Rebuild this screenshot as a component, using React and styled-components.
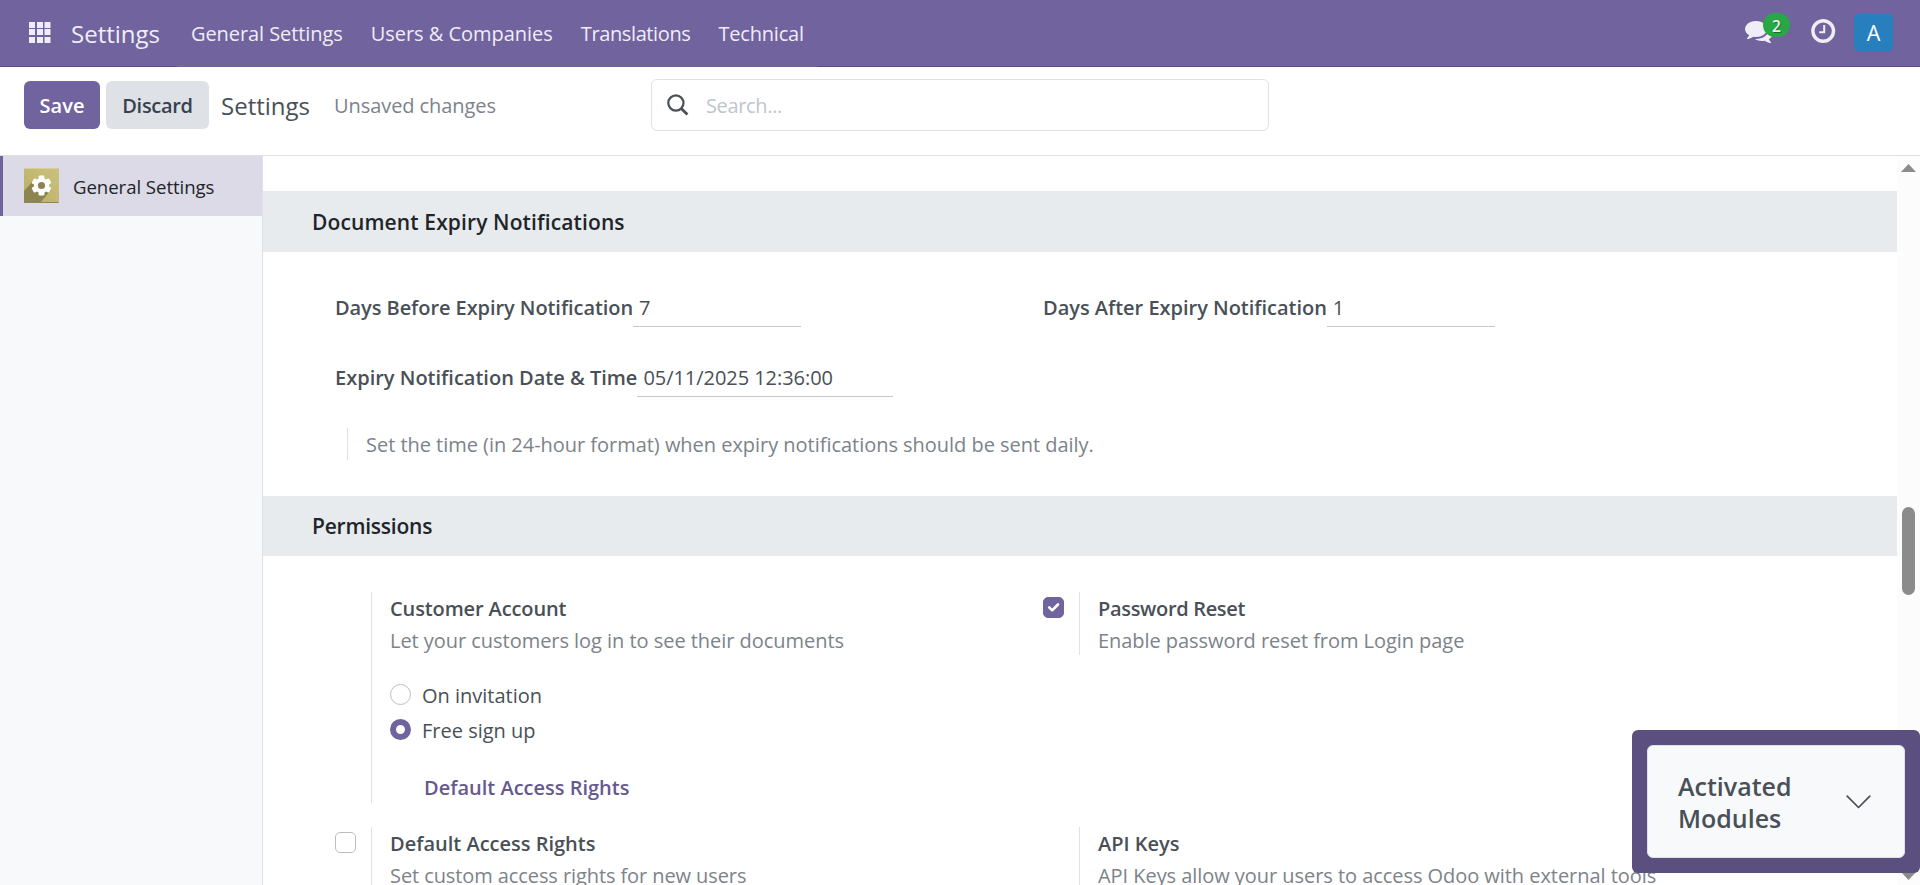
import React from 'react';
import styled, { createGlobalStyle, css } from 'styled-components';

const GlobalStyle = createGlobalStyle`
  *, *::before, *::after { box-sizing: border-box; }
  body {
    margin: 0;
    background: #fff;
    color: #495057;
    font-family: "Open Sans", "Noto Sans", sans-serif;
    font-size: 20px;
  }
`;

const tracked = css`
  letter-spacing: ${(p) => p.$track || 0}px;
  white-space: nowrap;
`;

const Page = styled.div`
  position: relative;
  display: flex;
  flex-direction: column;
  width: 1920px;
  height: 885px;
  overflow: hidden;
`;

/* ---------- top navigation ---------- */

const Navbar = styled.header`
  display: flex;
  flex: none;
  height: 67px;
  background: #71639e;
  box-shadow: inset 0 -1px 0 #5a4f7f;
  color: #efedf5;
`;

const AppsButton = styled.div`
  display: flex;
  align-items: center;
  width: 71px;
  padding: 0 0 2px 29px;
`;

const Brand = styled.div`
  display: flex;
  align-items: center;
  width: 106px;
  font-size: 24px;
  ${tracked}
`;

const Menu = styled.nav`
  display: flex;
  align-items: center;
  gap: 28px;
  width: 640px;
  padding-left: 14px;
  background: #71639e;
`;

const MenuItem = styled.span`
  ${tracked}
`;

const Systray = styled.div`
  display: flex;
  align-items: flex-start;
  margin-left: auto;
  padding-right: 27px;
`;

const Messages = styled.div`
  position: relative;
  width: 66px;
  padding-top: 17px;
  svg { display: block; }
`;

const Badge = styled.span`
  position: absolute;
  top: 13px;
  left: 18px;
  width: 27px;
  height: 24px;
  border-radius: 12px;
  background: #28a745;
  color: #efedf5;
  font-size: 15.5px;
  font-weight: 600;
  line-height: 26px;
  text-align: center;
  text-shadow: 1px 1px 0 rgba(0, 0, 0, 0.35);
`;

const Activity = styled.div`
  width: 43px;
  padding-top: 19px;
  svg { display: block; }
`;

const Avatar = styled.div`
  width: 39px;
  height: 39px;
  margin-top: 13px;
  border-radius: 6px;
  background: #277fbe;
  color: #fff;
  font-size: 21.5px;
  line-height: 39px;
  text-align: center;
`;

/* ---------- control panel ---------- */

const ControlPanel = styled.div`
  display: flex;
  align-items: flex-start;
  flex: none;
  height: 89px;
  padding: 12px 24px 0;
  border-bottom: 1px solid #dee2e6;
`;

const Actions = styled.div`
  display: flex;
  align-items: center;
  width: 627px;
  height: 52px;
`;

const Button = styled.button`
  height: 48px;
  margin-right: ${(p) => (p.$primary ? 6 : 12)}px;
  padding: 0;
  width: ${(p) => (p.$primary ? 76 : 103)}px;
  border: 0;
  border-radius: 6px;
  background: ${(p) => (p.$primary ? '#71639e' : '#dee2e6')};
  color: ${(p) => (p.$primary ? '#fff' : '#374151')};
  font: 600 20px "Open Sans", "Noto Sans", sans-serif;
  ${tracked}
`;

const Title = styled.h1`
  margin: 0;
  width: 113px;
  font-size: 24px;
  font-weight: 400;
`;

const Status = styled.span`
  color: #7c838a;
  ${tracked}
`;

const SearchBox = styled.div`
  display: flex;
  align-items: center;
  gap: 17px;
  width: 618px;
  height: 52px;
  padding-left: 15px;
  border: 1px solid #dee2e6;
  border-radius: 6px;
  svg { display: block; }
`;

const Placeholder = styled.span`
  color: #c0c5cd;
  ${tracked}
`;

/* ---------- body ---------- */

const Main = styled.div`
  display: flex;
  flex: 1;
  min-height: 0;
`;

const Sidebar = styled.aside`
  flex: none;
  width: 263px;
  border-right: 1px solid #dee2e6;
  background: #f8f9fb;
`;

const SidebarTab = styled.div`
  display: flex;
  align-items: center;
  height: 60px;
  padding-left: 21px;
  border-left: 3px solid #71639e;
  background: #dcdae7;
  color: #212529;
  font-size: 18.6px;
  ${tracked}
  svg { display: block; margin: 0 14px 1px 0; }
`;

const Content = styled.main`
  flex: 1;
  min-width: 0;
  height: 100%;
  padding-top: 35px;
  overflow: hidden;
`;

const SectionTitle = styled.h2`
  display: flex;
  align-items: center;
  height: ${(p) => p.$height}px;
  margin: 0;
  padding-left: 49px;
  background: #e7ebee;
  color: #212529;
  font-size: 21px;
  font-weight: 600;
  ${tracked}
`;

const FieldsPanel = styled.div`
  padding: 40px 0 36px 72px;
`;

const FieldRow = styled.div`
  display: flex;
  height: 35px;
  margin-bottom: ${(p) => p.$gap}px;
`;

const Field = styled.div`
  display: flex;
  width: 708px;
  line-height: 32px;
`;

const FieldLabel = styled.label`
  font-weight: 600;
  ${tracked}
`;

const FieldValue = styled.div`
  width: ${(p) => p.$width}px;
  padding-left: 6px;
  border-bottom: 1px solid #c6c8ca;
  ${tracked}
`;

const Note = styled.div`
  margin-left: 12px;
  height: 32px;
  padding-left: 18px;
  border-left: 1px solid #dee2e6;
  color: #7c838a;
  line-height: 34px;
  ${tracked}
`;

const SettingsGrid = styled.div`
  display: grid;
  grid-template-columns: 708px 1fr;
  align-items: start;
  row-gap: 24px;
  padding: 36px 0 0 72px;
`;

const Setting = styled.div`
  display: flex;
`;

const SettingLeft = styled.div`
  flex: none;
  width: 36px;
  padding-top: 5px;
`;

const Checkbox = styled.span`
  display: flex;
  align-items: center;
  justify-content: center;
  width: 21px;
  height: 21px;
  border: 1px solid ${(p) => (p.$checked ? '#71639e' : '#bbbec1')};
  border-radius: 5px;
  background: ${(p) => (p.$checked ? '#71639e' : '#fff')};
`;

const SettingRight = styled.div`
  height: ${(p) => p.$height}px;
  padding: 1px 0 0 18px;
  border-left: 1px solid #dee2e6;
`;

const SettingLabel = styled.div`
  font-weight: 600;
  line-height: 32px;
  ${tracked}
`;

const SettingText = styled.div`
  color: #7c838a;
  line-height: 32px;
  ${tracked}
`;

const RadioList = styled.div`
  margin: 20px 0 24px;
`;

const RadioRow = styled.label`
  display: flex;
  align-items: center;
  gap: 11px;
  height: 35px;
  ${tracked}
`;

const Radio = styled.span`
  width: 21px;
  height: 21px;
  border: ${(p) => (p.$checked ? '6px solid #71639e' : '1px solid #bbbec1')};
  border-radius: 50%;
  background: #fff;
`;

const RadioText = styled.span`
  padding-top: 1px;
`;

const SettingLink = styled.a`
  display: block;
  margin-left: 34px;
  color: #66598f;
  font-weight: 600;
  line-height: 34px;
  ${tracked}
`;

const Scrollbar = styled.div`
  display: flex;
  flex-direction: column;
  align-items: center;
  flex: none;
  width: 23px;
  padding: 8px 0 5px;
  background: #fcfcfc;
  svg { display: block; }
`;

const Thumb = styled.div`
  width: 13px;
  height: 88px;
  margin: 335px 0 auto;
  border-radius: 7px;
  background: #8b8b8b;
`;

/* ---------- floating module panel ---------- */

const ModulesPanel = styled.div`
  position: absolute;
  right: 0;
  bottom: 12px;
  width: 288px;
  height: 143px;
  padding: 15px;
  border-radius: 6px;
  background: #5b4f7f;
`;

const ModulesToggle = styled.div`
  display: flex;
  align-items: center;
  justify-content: space-between;
  height: 100%;
  padding: 1px 33px 0 30px;
  border: 1px solid #dee2e6;
  border-radius: 6px;
  background: #f8f9fb;
  font-size: 25px;
  font-weight: 600;
  line-height: 32px;
  svg { display: block; }
`;

const ModulesLabel = styled.span`
  width: 120px;
`;

/* ---------- icons ---------- */

const AppsIcon = () => (
  <svg width="22" height="21" viewBox="0 0 22 21" fill="#efedf5">
    {[0, 7, 15].map((y) =>
      [0, 8, 15.5].map((x) => <rect key={`${x}-${y}`} x={x} y={y} width="6" height="6" />)
    )}
  </svg>
);

const CommentsIcon = () => (
  <svg width="28" height="28" viewBox="0 0 1792 1792" fill="#efedf5">
    <path d="M1408 768q0 139-94 257t-256.5 186.5-353.5 68.5q-86 0-176-16-124 88-278 128-36 9-86 16h-3q-11 0-20.5-8t-11.5-21q-1-3-1-6.5t.5-6.5 2-6l2.5-5 3.5-5.5 4-5 4.5-5 4-4.5q5-6 23-25t26-29.5 22.5-29 25-38.5 20.5-44q-124-72-195-177t-71-224q0-139 94-257t256.5-186.5 353.5-68.5 353.5 68.5 256.5 186.5 94 257zm384 256q0 120-71 224.5t-195 176.5q10 24 20.5 44t25 38.5 22.5 29 26 29.5 23 25q1 1 4 4.5t4.5 5 4 5 3.5 5.5l2.5 5 2 6 .5 6.5-1 6.5q-3 14-13 22t-22 7q-50-7-86-16-154-40-278-128-90 16-176 16-271 0-472-132 58 4 88 4 161 0 309-45t264-129q125-92 192-212t67-254q0-77-23-152 129 71 204 178t75 230z" />
  </svg>
);

const ClockIcon = () => (
  <svg width="25" height="24" viewBox="0 0 25 24" fill="none" stroke="#efedf5">
    <circle cx="12.2" cy="12" r="10.3" strokeWidth="3.4" />
    <path d="M13.2 6v7.2H8.2" strokeWidth="2" />
  </svg>
);

const SearchIcon = () => (
  <svg width="22" height="22" viewBox="0 0 22 22" fill="none" stroke="#495057">
    <circle cx="8.9" cy="9" r="7.6" strokeWidth="2.2" />
    <path d="M14.2 14.4l6.2 6.2" strokeWidth="2.8" />
  </svg>
);

const GearTileIcon = () => (
  <svg width="35" height="35" viewBox="0 0 35 35">
    <defs>
      <linearGradient id="tile" x1="1" y1="0" x2="0" y2="1">
        <stop offset="0" stopColor="#cbc27f" />
        <stop offset="1" stopColor="#b9ae62" />
      </linearGradient>
      <clipPath id="tileClip"><rect width="35" height="35" rx="1.5" /></clipPath>
    </defs>
    <g clipPath="url(#tileClip)">
      <rect width="35" height="35" fill="url(#tile)" />
      <path d="M9 13L0 23v12h16L27 22z" fill="#8d8551" />
      <rect width="35" height="1" fill="#d6cf99" />
      <rect y="34" width="35" height="1" fill="#8f874f" />
      <g transform="translate(17.5 17.5)" fill="#fff">
        {[0, 60, 120, 180, 240, 300].map((a) => (
          <rect key={a} x="-2.9" y="-10" width="5.8" height="5.5" rx="1.3" transform={`rotate(${a})`} />
        ))}
        <circle r="5.6" fill="#8d8551" stroke="#fff" strokeWidth="4" />
      </g>
    </g>
  </svg>
);

const CheckIcon = () => (
  <svg width="13" height="11" viewBox="0 0 13 11" fill="none" stroke="#fff" strokeWidth="2.6" strokeLinecap="round" strokeLinejoin="round">
    <path d="M2.2 5.4l3 3 5.8-5.9" />
  </svg>
);

const ChevronIcon = () => (
  <svg width="25" height="14" viewBox="0 0 25 14" fill="none" stroke="#495057" strokeWidth="1.7" strokeLinecap="round" strokeLinejoin="round">
    <path d="M1.2 1.2l11.3 11.3L23.8 1.2" />
  </svg>
);

const ArrowUp = () => (
  <svg width="15" height="8" viewBox="0 0 15 8" fill="#8b8b8b"><path d="M0 8L7.5 0 15 8z" /></svg>
);

const ArrowDown = () => (
  <svg width="15" height="8" viewBox="0 0 15 8" fill="#8b8b8b"><path d="M0 0h15L7.5 8z" /></svg>
);

/* ---------- page ---------- */

const menu = [
  { label: 'General Settings', track: -0.08 },
  { label: 'Users & Companies', track: -0.03 },
  { label: 'Translations', track: -0.38 },
  { label: 'Technical', track: -0.2 },
];

function SettingItem({ checkbox, checked, height, label, text, labelTrack, textTrack, children }) {
  return (
    <Setting>
      <SettingLeft>
        {checkbox && <Checkbox $checked={checked}>{checked && <CheckIcon />}</Checkbox>}
      </SettingLeft>
      <SettingRight $height={height}>
        <SettingLabel $track={labelTrack}>{label}</SettingLabel>
        <SettingText $track={textTrack}>{text}</SettingText>
        {children}
      </SettingRight>
    </Setting>
  );
}

export default function App() {
  return (
    <Page>
      <GlobalStyle />
      <Navbar>
        <AppsButton><AppsIcon /></AppsButton>
        <Brand>Settings</Brand>
        <Menu>
          {menu.map((m) => <MenuItem key={m.label} $track={m.track}>{m.label}</MenuItem>)}
        </Menu>
        <Systray>
          <Messages><CommentsIcon /><Badge>2</Badge></Messages>
          <Activity><ClockIcon /></Activity>
          <Avatar>A</Avatar>
        </Systray>
      </Navbar>

      <ControlPanel>
        <Actions>
          <Button $primary>Save</Button>
          <Button $track={-0.3}>Discard</Button>
          <Title>Settings</Title>
          <Status $track={-0.07}>Unsaved changes</Status>
        </Actions>
        <SearchBox>
          <SearchIcon />
          <Placeholder $track={-0.35}>Search...</Placeholder>
        </SearchBox>
      </ControlPanel>

      <Main>
        <Sidebar>
          <SidebarTab $track={-0.05}><GearTileIcon />General Settings</SidebarTab>
        </Sidebar>

        <Content>
          <SectionTitle $height={61} $track={0.12}>Document Expiry Notifications</SectionTitle>
          <FieldsPanel>
            <FieldRow $gap={35}>
              <Field>
                <FieldLabel $track={-0.07}>Days Before Expiry Notification</FieldLabel>
                <FieldValue $width={168}>7</FieldValue>
              </Field>
              <Field>
                <FieldLabel $track={-0.02}>Days After Expiry Notification</FieldLabel>
                <FieldValue $width={168}>1</FieldValue>
              </Field>
            </FieldRow>
            <FieldRow $gap={31}>
              <Field>
                <FieldLabel>Expiry Notification Date &amp; Time</FieldLabel>
                <FieldValue $width={256} $track={-0.05}>05/11/2025 12:36:00</FieldValue>
              </Field>
            </FieldRow>
            <Note $track={-0.03}>Set the time (in 24-hour format) when expiry notifications should be sent daily.</Note>
          </FieldsPanel>

          <SectionTitle $height={60} $track={-0.22}>Permissions</SectionTitle>
          <SettingsGrid>
            <SettingItem
              height={211}
              label="Customer Account"
              labelTrack={-0.12}
              text="Let your customers log in to see their documents"
              textTrack={-0.04}
            >
              <RadioList>
                <RadioRow><Radio /><RadioText>On invitation</RadioText></RadioRow>
                <RadioRow><Radio $checked /><RadioText>Free sign up</RadioText></RadioRow>
              </RadioList>
              <SettingLink>Default Access Rights</SettingLink>
            </SettingItem>
            <SettingItem
              checkbox
              checked
              height={63}
              label="Password Reset"
              labelTrack={-0.33}
              text="Enable password reset from Login page"
              textTrack={-0.05}
            />
            <SettingItem
              checkbox
              height={100}
              label="Default Access Rights"
              text="Set custom access rights for new users"
              textTrack={-0.09}
            />
            <SettingItem
              height={100}
              label="API Keys"
              text="API Keys allow your users to access Odoo with external tools"
              textTrack={-0.05}
            />
          </SettingsGrid>
        </Content>

        <Scrollbar><ArrowUp /><Thumb /><ArrowDown /></Scrollbar>
      </Main>

      <ModulesPanel>
        <ModulesToggle>
          <ModulesLabel>Activated Modules</ModulesLabel>
          <ChevronIcon />
        </ModulesToggle>
      </ModulesPanel>
    </Page>
  );
}
